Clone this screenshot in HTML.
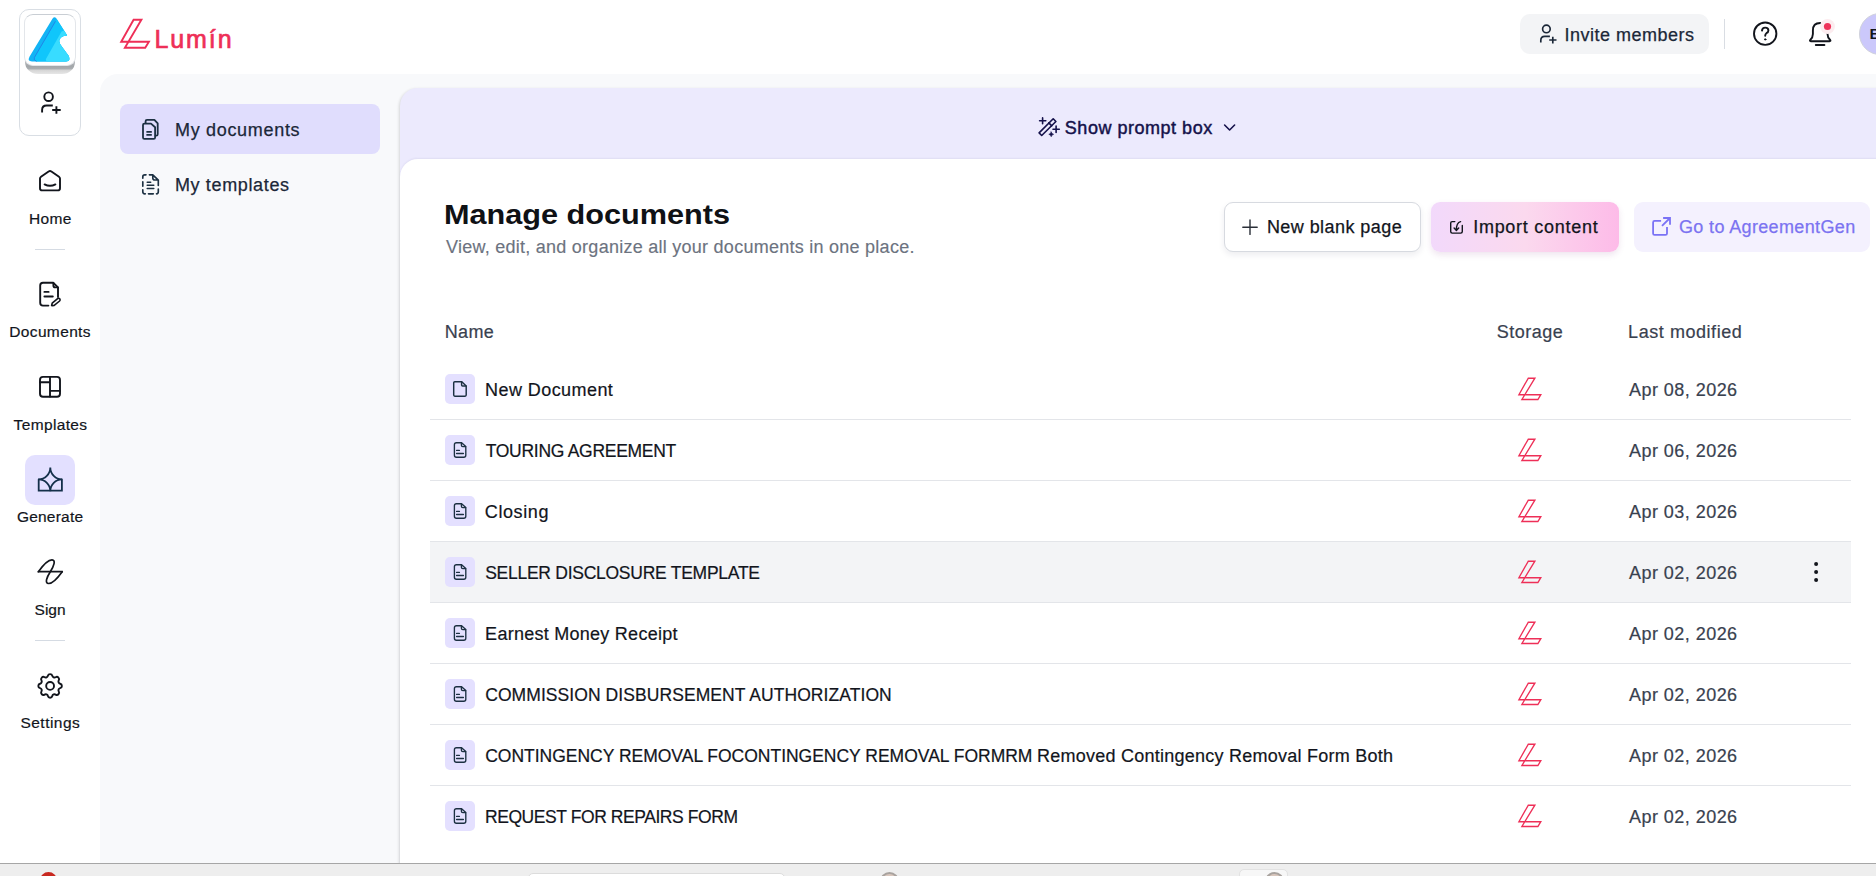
<!DOCTYPE html>
<html lang="en">
<head>
<meta charset="utf-8">
<title>Lumin - Manage documents</title>
<style>
*{box-sizing:border-box;margin:0;padding:0}
html,body{width:1876px;height:876px;overflow:hidden;background:#fff}
body{position:relative;font-family:"Liberation Sans",Arial,sans-serif;color:#12151c}
.abs{position:absolute}
.t{position:absolute;white-space:nowrap;line-height:1}
svg{position:absolute;overflow:visible}
#orgbox{left:19px;top:9px;width:62px;height:127px;border:1px solid #d9dee4;border-radius:10px;background:#fff}
#orgbase{left:25px;top:44px;width:50px;height:29.5px;border-radius:0 0 13px 13px/0 0 12px 12px;background:linear-gradient(#fff 0,#c4c7ca 50%,#a2a6a9 74%,#a9adb0 82%,#d6d6d6 88%,#e6e6e6 100%)}
#orgtile{left:24px;top:13.5px;width:52px;height:52px;border-radius:9px;background:#fff;border:1px solid #e3e6ea;border-top-color:#c9ced4}
.sep{left:35px;width:30px;height:1px;background:#d5dbe3}
#genbg{left:25px;top:455px;width:50px;height:50px;border-radius:10px;background:#e3e0ff}
#side{left:100px;top:74px;width:1776px;height:790px;background:#f8f9fb;border-top-left-radius:18px}
#sel{left:120px;top:104px;width:260px;height:50px;border-radius:8px;background:#e0ddfd}
#banner{left:400px;top:88.4px;width:1480px;height:776px;background:#eceafd;border-top-left-radius:18px;box-shadow:-1px 1px 3px rgba(0,0,0,.14)}
#panel{left:400px;top:159px;width:1480px;height:705px;background:#fff;border-top-left-radius:18px;box-shadow:0 -1px 2px rgba(60,50,120,.07)}
#rowhl{left:430px;top:542px;width:1421px;height:60px;background:#f3f4f6}
.rl{left:430px;width:1421px;height:1px;background:#e3e5e9}
.ib{left:445px;width:30px;height:30px;border-radius:5px;background:#e4e0ff}
#bot{left:0;top:863px;width:1876px;height:13px;background:#eeeeee;border-top:1px solid #a6a6a6}
</style>
</head>
<body>
<div id="side" class="abs"></div>
<div id="sel" class="abs"></div>
<div id="banner" class="abs"></div>
<div id="panel" class="abs"></div>
<div id="orgbox" class="abs"></div>
<div id="orgbase" class="abs"></div>
<div id="orgtile" class="abs"></div>
<div class="abs sep" style="top:249px"></div>
<div id="genbg" class="abs"></div>
<div class="abs sep" style="top:640px"></div>
<div class="abs" id="invite" style="left:1520px;top:14px;width:189px;height:40px;border-radius:10px;background:#f3f4f6"></div>
<div class="abs" style="left:1724px;top:19px;width:1px;height:30px;background:#d9dde3"></div>
<div class="abs" id="avatar" style="left:1859px;top:13px;width:42px;height:42px;border-radius:21px;background:#cbc8fb;border:1px solid #d0d2dc"></div>
<div class="abs" id="btn1" style="left:1224px;top:202px;width:197px;height:50px;border-radius:9px;background:#fff;border:1px solid #d7dae0;box-shadow:0 3px 6px rgba(20,20,60,.08)"></div>
<div class="abs" id="btn2" style="left:1431px;top:202px;width:188px;height:50px;border-radius:9px;background:linear-gradient(90deg,#f2d9fb 0%,#fbd9ee 50%,#fdbbe8 100%);box-shadow:0 3px 6px rgba(120,40,120,.12)"></div>
<div class="abs" id="btn3" style="left:1634px;top:202px;width:236px;height:50px;border-radius:9px;background:#f4f1fe"></div>
<div id="rowhl" class="abs"></div>
<div class="abs rl" style="top:419px"></div>
<div class="abs ib" style="top:374px"></div>
<div class="abs rl" style="top:480px"></div>
<div class="abs ib" style="top:435px"></div>
<div class="abs rl" style="top:541px"></div>
<div class="abs ib" style="top:496px"></div>
<div class="abs rl" style="top:602px"></div>
<div class="abs ib" style="top:557px"></div>
<div class="abs rl" style="top:663px"></div>
<div class="abs ib" style="top:618px"></div>
<div class="abs rl" style="top:724px"></div>
<div class="abs ib" style="top:679px"></div>
<div class="abs rl" style="top:785px"></div>
<div class="abs ib" style="top:740px"></div>
<div class="abs ib" style="top:801px"></div>
<div id="bot" class="abs"></div>
<div class="abs" style="left:40px;top:871.5px;width:17px;height:17px;border-radius:9px;background:#c8281f"></div>
<div class="abs" style="left:528px;top:873px;width:257px;height:10px;border-radius:6px;background:#fff;border:1px solid #dcdcdc"></div>
<div class="abs" style="left:880px;top:871.5px;width:19px;height:19px;border-radius:10px;background:#d9c7bd;border:2px solid #a8a29e"></div>
<div class="abs" style="left:1239px;top:869px;width:49px;height:14px;border-radius:5px;background:#f7f7f7;border:1px solid #e2e2e2"></div>
<div class="abs" style="left:1265px;top:871.5px;width:19px;height:19px;border-radius:10px;background:#d9c7bd;border:2px solid #a8a29e"></div>

<svg id="icons" style="left:0;top:0" width="1876" height="876" viewBox="0 0 1876 876" fill="none" stroke-linecap="round" stroke-linejoin="round">
<!-- org logo -->
<g id="orglogo" stroke="none">
  <path d="M52.6 18.6 Q54.4 15.8 56.4 18.4 L67.2 35.4 Q59.5 36 59.2 41 Q59.4 44 62.5 47.5 L68.6 55.8 Q71.2 61.5 66 61.5 L32 61.5 Q27 61.5 29.6 56.6 Z" fill="#12b4f5"/>
  <path d="M55.6 21 L56.4 18.4 L67.2 35.4 Q59.5 36 59.2 41 Q59.4 44 62.5 47.5 L68.6 55.8 Q71.2 61.5 66 61.5 L36.4 61.5 Q33 60.4 34.4 57.6 Z" fill="#10c6fb"/>
  <path d="M61.6 31.5 L64 30.4 L67.2 35.4 Q59.5 36 59.2 41 Q59.4 44 62.5 47.5 L68.6 55.8 Q71.2 61.5 66 61.5 L47.4 61.5 Q45 60.6 46.2 58.5 Z" fill="#38dcff"/>
  <path d="M55.3 21.6 L34.4 57.5 Q33.2 60.2 36.2 61.2" fill="none" stroke="#2577e3" stroke-width="0.8"/>
</g>
<!-- add user (rail) -->
<g stroke="#12151c" stroke-width="1.9" stroke-linecap="butt">
  <circle cx="48.6" cy="96.7" r="4.3"/>
  <path d="M42.1 112.5 V110 Q42.1 105.5 46.6 105.5 H52.8"/>
  <path d="M56.4 106.3 V113.8 M52.2 110 H60.7"/>
</g>
<!-- home -->
<g stroke="#12151c" stroke-width="1.9">
  <path d="M40 178.6 Q40 177.4 41 176.7 L48.6 171.5 Q50 170.6 51.4 171.5 L59 176.7 Q60 177.4 60 178.6 V188.2 Q60 190.4 57.8 190.4 H42.2 Q40 190.4 40 188.2 Z"/>
  <path d="M44.6 184.4 Q50 187.2 55.4 184.4"/>
</g>
<!-- documents -->
<g stroke="#12151c" stroke-width="1.9">
  <path d="M48.4 305.6 H43 Q40.2 305.6 40.2 302.8 V285.6 Q40.2 282.8 43 282.8 H53.4 L58 287.4 V297"/>
  <path d="M53.4 283 V285.4 Q53.4 287.4 55.4 287.4 H57.8"/>
  <path d="M44.4 291.9 H48.6 M44.4 296.5 H52.8"/>
  <path d="M52 305.8 L51.6 305.4 L52.2 303.2 L57.6 298.6 Q58.8 297.8 59.8 298.9 Q60.6 300 59.6 301 L54.2 305.4 Z" stroke-width="1.6"/>
</g>
<!-- templates -->
<g stroke="#12151c" stroke-width="1.9">
  <rect x="40" y="376.9" width="20" height="19.8" rx="3"/>
  <path d="M50 377 V396.6 M40 382.2 H50 M50 390.9 H60"/>
</g>
<!-- generate -->
<g stroke="#14304a" stroke-width="1.8" stroke-linejoin="miter">
  <path d="M38.7 479.4 V490.6 H61.9 V479.4"/>
  <path d="M50.3 467.6 A11.8 11.8 0 0 0 62.1 479.4 A11.8 11.8 0 0 0 50.3 491.2 A11.8 11.8 0 0 0 38.5 479.4 A11.8 11.8 0 0 0 50.3 467.6 Z" stroke-linejoin="bevel"/>
</g>
<!-- sign -->
<g stroke="#12151c" stroke-width="1.7">
  <path d="M38.4 571.7 H62.2"/>
  <path d="M38.4 571.7 C42.5 566 48 559.8 52 559.9 C56 560 54 566 50.3 571.7 C46.6 577.4 44.6 583.4 48.6 583.5 C52.6 583.6 58.1 577.4 62.2 571.7"/>
</g>
<!-- settings -->
<g stroke="#12151c" stroke-width="1.45" transform="translate(50.1,685.9) scale(1.31) translate(-12,-12)">
  <path d="M10.325 4.317c.426-1.756 2.924-1.756 3.35 0a1.724 1.724 0 0 0 2.573 1.066c1.543-.94 3.31.826 2.37 2.37a1.724 1.724 0 0 0 1.065 2.572c1.756.426 1.756 2.924 0 3.35a1.724 1.724 0 0 0-1.066 2.573c.94 1.543-.826 3.31-2.37 2.37a1.724 1.724 0 0 0-2.572 1.065c-.426 1.756-2.924 1.756-3.35 0a1.724 1.724 0 0 0-2.573-1.066c-1.543.94-3.31-.826-2.37-2.37a1.724 1.724 0 0 0-1.065-2.572c-1.756-.426-1.756-2.924 0-3.35a1.724 1.724 0 0 0 1.066-2.573c-.94-1.543.826-3.31 2.37-2.37 1 .608 2.296.07 2.572-1.065z"/>
  <circle cx="12" cy="12" r="3"/>
</g>
<!-- header logo -->
<g stroke="#ee2f57" stroke-width="1.9" stroke-linejoin="miter" stroke-linecap="butt">
  <path d="M133.6 19.8 H141.4 L124.9 47.7 H145.2 L148.9 41.7 H121.2 Z"/>
</g>
<!-- invite icon -->
<g stroke="#1b2738" stroke-width="1.65" stroke-linecap="butt">
  <circle cx="1546.4" cy="28.9" r="3.8"/>
  <path d="M1540.8 42.5 V40.4 Q1540.8 36.4 1544.8 36.4 H1549.9"/>
  <path d="M1552.8 36.7 V43.5 M1549.2 40 H1556.5"/>
</g>
<!-- help -->
<g stroke="#12151c" stroke-width="1.9">
  <circle cx="1765.2" cy="33.7" r="11.2"/>
  <path d="M1762 30.6 Q1762.2 27.6 1765.2 27.6 Q1768.4 27.6 1768.4 30.4 Q1768.4 32.2 1766.4 33.2 Q1765.2 34 1765.2 35.8"/>
  <circle cx="1765.2" cy="39.4" r="0.7" fill="#12151c" stroke-width="1"/>
</g>
<!-- bell -->
<g stroke="#12151c" stroke-width="1.9">
  <path d="M1820.2 23 Q1812.9 23 1812.9 30.4 V34 Q1812.9 37.6 1810.2 40 Q1809.4 41.2 1810.8 41.2 H1829.6 Q1831 41.2 1830.2 40 Q1827.5 37.6 1827.5 34 V30.4"/>
  <path d="M1815.8 45 H1824.4"/>
  <circle cx="1827.5" cy="26.5" r="7.4" fill="#fcecef" stroke="none"/>
  <circle cx="1827.5" cy="26.5" r="3.6" fill="#ee3259" stroke="none"/>
</g>
<!-- my documents icon -->
<g stroke="#1c3042" stroke-width="1.8">
  <path d="M144.4 123.6 H151 L155.1 127.2 V137.4 Q155.1 138.8 153.7 138.8 H144.4 Q143 138.8 143 137.4 V125 Q143 123.6 144.4 123.6 Z"/>
  <path d="M145.6 123.2 V121.2 Q145.6 119.8 147 119.8 H154.4 L157.7 123.4 V134.2 Q157.7 135.6 156.3 135.6 H155.6"/>
  <path d="M146.4 131.8 H151.8 M146.4 134.9 H151.8" stroke-linecap="butt" stroke-width="1.7"/>
</g>
<!-- my templates icon -->
<g stroke="#1c3042" stroke-width="1.65">
  <path d="M142.8 178.2 V176.8 Q142.8 174.8 144.8 174.8 H146 M149.4 174.8 H152.8 L158.3 180.2 V185.5 M152.8 175 V178 Q152.8 180 154.8 180 H158 M142.8 181.9 V186.2 M142.8 189.7 V191.8 Q142.8 193.8 144.8 193.8 H145.3 M148.5 193.8 H153.3 M156.5 193.8 Q158.3 193.8 158.3 191.8 V189"/>
  <path d="M147.2 182.3 H150.7 M147.2 185.2 H153.8 M147.2 188.4 H153.8" stroke-width="1.5"/>
</g>
<!-- wand -->
<g stroke="#14114a" stroke-width="1.6">
  <path d="M1053.2 118.8 L1055.9 121.5 L1041.7 135.5 L1039.1 132.9 Z"/>
  <path d="M1048.8 122.9 L1051.8 125.8"/>
  <path d="M1042.6 117.9 V123.7 M1039.6 120.8 H1045.8"/>
  <path d="M1056.1 126.1 V132.5 M1053 129.3 H1059.3"/>
  <path d="M1051.2 131.9 L1052 133.5 L1053.6 134.3 L1052 135.1 L1051.2 136.7 L1050.4 135.1 L1048.8 134.3 L1050.4 133.5 Z" fill="#14114a" stroke-width="0.6"/>
</g>
<path d="M1224.6 125 L1229.6 130 L1234.6 125" stroke="#14114a" stroke-width="1.6"/>
<!-- plus -->
<path d="M1250 220 V234.4 M1242.8 227.2 H1257.2" stroke="#2a2f38" stroke-width="1.4"/>
<!-- import -->
<g stroke="#12151c" stroke-width="1.4">
  <path d="M1454.8 221.6 H1452.2 Q1450.7 221.6 1450.7 223.1 V231.6 Q1450.7 233.1 1452.2 233.1 H1460.8 Q1462.3 233.1 1462.3 231.6 V225.4"/>
  <path d="M1460.6 221.6 Q1456.2 222.6 1456.4 230.2 M1454.1 228 L1456.4 230.4 L1458.7 228"/>
</g>
<!-- external -->
<g stroke="#7a72f5" stroke-width="1.8" stroke-linecap="butt" stroke-linejoin="miter">
  <path d="M1661.1 220.9 H1654.6 Q1653.1 220.9 1653.1 222.4 V233.4 Q1653.1 234.9 1654.6 234.9 H1665.5 Q1667 234.9 1667 233.4 V226.9"/>
  <path d="M1663.1 218 H1670 V224.8 M1670 218 L1662 225.9"/>
</g>
<g transform="translate(0,0)" stroke="#1c3042" stroke-width="1.45"><path d="M454.8 381.7 H461.8 L466.2 386 V395.1 Q466.2 396.2 465.1 396.2 H454.8 Q453.7 396.2 453.7 395.1 V382.8 Q453.7 381.7 454.8 381.7 Z"/><path d="M461.6 382 V385 Q461.6 386 462.6 386 H466"/></g>
<g transform="translate(0,0)" stroke="#ee2f57" stroke-width="1.35" stroke-linejoin="miter" stroke-linecap="butt"><path d="M1528.3 378.2 H1534.9 L1521.9 399.5 H1537.9 L1540.8 394.7 H1518.9 Z"/></g>
<g transform="translate(0,0)" stroke="#1c3042" stroke-width="1.35"><path d="M456.4 442.7 H461.6 L465.8 446.6 V455.2 Q465.8 457.2 463.8 457.2 H456.4 Q454.4 457.2 454.4 455.2 V444.7 Q454.4 442.7 456.4 442.7 Z"/><path d="M461.4 443 V445.2 Q461.4 446.6 462.8 446.6 H465.6"/><path d="M456.6 450.4 H459.4 M456.6 453.5 H463.4"/></g>
<g transform="translate(0,61)" stroke="#ee2f57" stroke-width="1.35" stroke-linejoin="miter" stroke-linecap="butt"><path d="M1528.3 378.2 H1534.9 L1521.9 399.5 H1537.9 L1540.8 394.7 H1518.9 Z"/></g>
<g transform="translate(0,61)" stroke="#1c3042" stroke-width="1.35"><path d="M456.4 442.7 H461.6 L465.8 446.6 V455.2 Q465.8 457.2 463.8 457.2 H456.4 Q454.4 457.2 454.4 455.2 V444.7 Q454.4 442.7 456.4 442.7 Z"/><path d="M461.4 443 V445.2 Q461.4 446.6 462.8 446.6 H465.6"/><path d="M456.6 450.4 H459.4 M456.6 453.5 H463.4"/></g>
<g transform="translate(0,122)" stroke="#ee2f57" stroke-width="1.35" stroke-linejoin="miter" stroke-linecap="butt"><path d="M1528.3 378.2 H1534.9 L1521.9 399.5 H1537.9 L1540.8 394.7 H1518.9 Z"/></g>
<g transform="translate(0,122)" stroke="#1c3042" stroke-width="1.35"><path d="M456.4 442.7 H461.6 L465.8 446.6 V455.2 Q465.8 457.2 463.8 457.2 H456.4 Q454.4 457.2 454.4 455.2 V444.7 Q454.4 442.7 456.4 442.7 Z"/><path d="M461.4 443 V445.2 Q461.4 446.6 462.8 446.6 H465.6"/><path d="M456.6 450.4 H459.4 M456.6 453.5 H463.4"/></g>
<g transform="translate(0,183)" stroke="#ee2f57" stroke-width="1.35" stroke-linejoin="miter" stroke-linecap="butt"><path d="M1528.3 378.2 H1534.9 L1521.9 399.5 H1537.9 L1540.8 394.7 H1518.9 Z"/></g>
<g transform="translate(0,183)" stroke="#1c3042" stroke-width="1.35"><path d="M456.4 442.7 H461.6 L465.8 446.6 V455.2 Q465.8 457.2 463.8 457.2 H456.4 Q454.4 457.2 454.4 455.2 V444.7 Q454.4 442.7 456.4 442.7 Z"/><path d="M461.4 443 V445.2 Q461.4 446.6 462.8 446.6 H465.6"/><path d="M456.6 450.4 H459.4 M456.6 453.5 H463.4"/></g>
<g transform="translate(0,244)" stroke="#ee2f57" stroke-width="1.35" stroke-linejoin="miter" stroke-linecap="butt"><path d="M1528.3 378.2 H1534.9 L1521.9 399.5 H1537.9 L1540.8 394.7 H1518.9 Z"/></g>
<g transform="translate(0,244)" stroke="#1c3042" stroke-width="1.35"><path d="M456.4 442.7 H461.6 L465.8 446.6 V455.2 Q465.8 457.2 463.8 457.2 H456.4 Q454.4 457.2 454.4 455.2 V444.7 Q454.4 442.7 456.4 442.7 Z"/><path d="M461.4 443 V445.2 Q461.4 446.6 462.8 446.6 H465.6"/><path d="M456.6 450.4 H459.4 M456.6 453.5 H463.4"/></g>
<g transform="translate(0,305)" stroke="#ee2f57" stroke-width="1.35" stroke-linejoin="miter" stroke-linecap="butt"><path d="M1528.3 378.2 H1534.9 L1521.9 399.5 H1537.9 L1540.8 394.7 H1518.9 Z"/></g>
<g transform="translate(0,305)" stroke="#1c3042" stroke-width="1.35"><path d="M456.4 442.7 H461.6 L465.8 446.6 V455.2 Q465.8 457.2 463.8 457.2 H456.4 Q454.4 457.2 454.4 455.2 V444.7 Q454.4 442.7 456.4 442.7 Z"/><path d="M461.4 443 V445.2 Q461.4 446.6 462.8 446.6 H465.6"/><path d="M456.6 450.4 H459.4 M456.6 453.5 H463.4"/></g>
<g transform="translate(0,366)" stroke="#ee2f57" stroke-width="1.35" stroke-linejoin="miter" stroke-linecap="butt"><path d="M1528.3 378.2 H1534.9 L1521.9 399.5 H1537.9 L1540.8 394.7 H1518.9 Z"/></g>
<g transform="translate(0,366)" stroke="#1c3042" stroke-width="1.35"><path d="M456.4 442.7 H461.6 L465.8 446.6 V455.2 Q465.8 457.2 463.8 457.2 H456.4 Q454.4 457.2 454.4 455.2 V444.7 Q454.4 442.7 456.4 442.7 Z"/><path d="M461.4 443 V445.2 Q461.4 446.6 462.8 446.6 H465.6"/><path d="M456.6 450.4 H459.4 M456.6 453.5 H463.4"/></g>
<g transform="translate(0,427)" stroke="#ee2f57" stroke-width="1.35" stroke-linejoin="miter" stroke-linecap="butt"><path d="M1528.3 378.2 H1534.9 L1521.9 399.5 H1537.9 L1540.8 394.7 H1518.9 Z"/></g>
<!-- kebab -->
<g fill="#12151c" stroke="none"><circle cx="1816.1" cy="563.9" r="2"/><circle cx="1816.1" cy="572" r="2"/><circle cx="1816.1" cy="580.1" r="2"/></g>
</svg>
<div class="t" id="n1" style="left:29.07px;top:211.00px;font-size:15.5px;font-weight:400;color:#12151c;letter-spacing:0.309px;-webkit-text-stroke:.2px #12151c;">Home</div>
<div class="t" id="n2" style="left:9.22px;top:324.00px;font-size:15.5px;font-weight:400;color:#12151c;letter-spacing:0.366px;-webkit-text-stroke:.2px #12151c;">Documents</div>
<div class="t" id="n3" style="left:13.55px;top:417.00px;font-size:15.5px;font-weight:400;color:#12151c;letter-spacing:0.365px;-webkit-text-stroke:.2px #12151c;">Templates</div>
<div class="t" id="n4" style="left:16.88px;top:509.00px;font-size:15.5px;font-weight:400;color:#12151c;letter-spacing:0.231px;-webkit-text-stroke:.2px #12151c;">Generate</div>
<div class="t" id="n5" style="left:34.50px;top:602.00px;font-size:15.5px;font-weight:400;color:#12151c;letter-spacing:0.043px;-webkit-text-stroke:.2px #12151c;">Sign</div>
<div class="t" id="n6" style="left:20.50px;top:715.00px;font-size:15.5px;font-weight:400;color:#12151c;letter-spacing:0.457px;-webkit-text-stroke:.2px #12151c;">Settings</div>
<div class="t" id="lumin" style="left:154.57px;top:27.00px;font-size:25px;font-weight:400;color:#ee2f57;letter-spacing:1.876px;-webkit-text-stroke:.7px #ee2f57;">Lumín</div>
<div class="t" id="inv" style="left:1564.61px;top:26.00px;font-size:18px;font-weight:400;color:#1b2738;letter-spacing:0.480px;-webkit-text-stroke:.25px #1b2738;">Invite members</div>
<div class="t" id="av" style="left:1869.47px;top:26.00px;font-size:15.5px;font-weight:700;color:#12151c;letter-spacing:0.000px;">B</div>
<div class="t" id="s1" style="left:174.96px;top:121.00px;font-size:18px;font-weight:400;color:#1b2738;letter-spacing:0.692px;-webkit-text-stroke:.25px #1b2738;">My documents</div>
<div class="t" id="s2" style="left:174.93px;top:176.00px;font-size:18px;font-weight:400;color:#1b2738;letter-spacing:0.647px;-webkit-text-stroke:.25px #1b2738;">My templates</div>
<div class="t" id="spb" style="left:1064.85px;top:119.00px;font-size:18px;font-weight:400;color:#14114a;letter-spacing:0.519px;-webkit-text-stroke:.45px #14114a;">Show prompt box</div>
<div class="t" id="title" style="left:443.76px;top:200.00px;font-size:28.5px;font-weight:700;color:#0f1115;letter-spacing:0.000px;transform:scaleX(1.0748);transform-origin:0 0;">Manage documents</div>
<div class="t" id="sub" style="left:445.96px;top:238.00px;font-size:18px;font-weight:400;color:#6c7380;letter-spacing:0.259px;-webkit-text-stroke:.15px #6c7380;">View, edit, and organize all your documents in one place.</div>
<div class="t" id="b1" style="left:1266.92px;top:218.00px;font-size:18px;font-weight:400;color:#12151c;letter-spacing:0.439px;-webkit-text-stroke:.25px #12151c;">New blank page</div>
<div class="t" id="b2" style="left:1473.20px;top:218.00px;font-size:18px;font-weight:400;color:#12151c;letter-spacing:0.724px;-webkit-text-stroke:.25px #12151c;">Import content</div>
<div class="t" id="b3" style="left:1679.00px;top:218.00px;font-size:18px;font-weight:400;color:#7b73f1;letter-spacing:0.357px;-webkit-text-stroke:.25px #7b73f1;">Go to AgreementGen</div>
<div class="t" id="h1" style="left:444.76px;top:323.00px;font-size:18px;font-weight:400;color:#39414f;letter-spacing:0.312px;-webkit-text-stroke:.2px #39414f;">Name</div>
<div class="t" id="h2" style="left:1496.67px;top:323.00px;font-size:18px;font-weight:400;color:#39414f;letter-spacing:0.524px;-webkit-text-stroke:.2px #39414f;">Storage</div>
<div class="t" id="h3" style="left:1628.10px;top:323.00px;font-size:18px;font-weight:400;color:#39414f;letter-spacing:0.554px;-webkit-text-stroke:.2px #39414f;">Last modified</div>
<div class="t" id="r0" style="left:485.11px;top:381.00px;font-size:18px;font-weight:400;color:#12151c;letter-spacing:0.428px;-webkit-text-stroke:.2px #12151c;">New Document</div>
<div class="t" id="d0" style="left:1628.94px;top:381.00px;font-size:18px;font-weight:400;color:#39414f;letter-spacing:0.464px;-webkit-text-stroke:.2px #39414f;">Apr 08, 2026</div>
<div class="t" id="r1" style="left:485.67px;top:443.00px;font-size:17.5px;font-weight:400;color:#12151c;letter-spacing:-0.279px;-webkit-text-stroke:.2px #12151c;">TOURING AGREEMENT</div>
<div class="t" id="d1" style="left:1628.94px;top:442.00px;font-size:18px;font-weight:400;color:#39414f;letter-spacing:0.464px;-webkit-text-stroke:.2px #39414f;">Apr 06, 2026</div>
<div class="t" id="r2" style="left:484.81px;top:503.00px;font-size:18px;font-weight:400;color:#12151c;letter-spacing:0.603px;-webkit-text-stroke:.2px #12151c;">Closing</div>
<div class="t" id="d2" style="left:1628.94px;top:503.00px;font-size:18px;font-weight:400;color:#39414f;letter-spacing:0.464px;-webkit-text-stroke:.2px #39414f;">Apr 03, 2026</div>
<div class="t" id="r3" style="left:485.14px;top:565.00px;font-size:17.5px;font-weight:400;color:#12151c;letter-spacing:-0.261px;-webkit-text-stroke:.2px #12151c;">SELLER DISCLOSURE TEMPLATE</div>
<div class="t" id="d3" style="left:1628.94px;top:564.00px;font-size:18px;font-weight:400;color:#39414f;letter-spacing:0.464px;-webkit-text-stroke:.2px #39414f;">Apr 02, 2026</div>
<div class="t" id="r4" style="left:485.11px;top:625.00px;font-size:18px;font-weight:400;color:#12151c;letter-spacing:0.263px;-webkit-text-stroke:.2px #12151c;">Earnest Money Receipt</div>
<div class="t" id="d4" style="left:1628.94px;top:625.00px;font-size:18px;font-weight:400;color:#39414f;letter-spacing:0.464px;-webkit-text-stroke:.2px #39414f;">Apr 02, 2026</div>
<div class="t" id="r5" style="left:485.20px;top:687.00px;font-size:17.5px;font-weight:400;color:#12151c;letter-spacing:0.076px;-webkit-text-stroke:.2px #12151c;">COMMISSION DISBURSEMENT AUTHORIZATION</div>
<div class="t" id="d5" style="left:1628.94px;top:686.00px;font-size:18px;font-weight:400;color:#39414f;letter-spacing:0.464px;-webkit-text-stroke:.2px #39414f;">Apr 02, 2026</div>
<div id="r6"><span class="t" id="r6a" style="left:485.20px;top:748.00px;font-size:17.5px;font-weight:400;color:#12151c;letter-spacing:-0.011px;-webkit-text-stroke:.2px #12151c;">CONTINGENCY REMOVAL FOCONTINGENCY REMOVAL FORMRM </span><span class="t" id="r6b" style="left:1037.11px;top:747.00px;font-size:18px;font-weight:400;color:#12151c;letter-spacing:0.241px;-webkit-text-stroke:.2px #12151c;">Removed Contingency Removal Form Both</span></div>
<div class="t" id="d6" style="left:1628.94px;top:747.00px;font-size:18px;font-weight:400;color:#39414f;letter-spacing:0.464px;-webkit-text-stroke:.2px #39414f;">Apr 02, 2026</div>
<div class="t" id="r7" style="left:484.98px;top:809.00px;font-size:17.5px;font-weight:400;color:#12151c;letter-spacing:-0.427px;-webkit-text-stroke:.2px #12151c;">REQUEST FOR REPAIRS FORM</div>
<div class="t" id="d7" style="left:1628.94px;top:808.00px;font-size:18px;font-weight:400;color:#39414f;letter-spacing:0.464px;-webkit-text-stroke:.2px #39414f;">Apr 02, 2026</div>
</body>
</html>
